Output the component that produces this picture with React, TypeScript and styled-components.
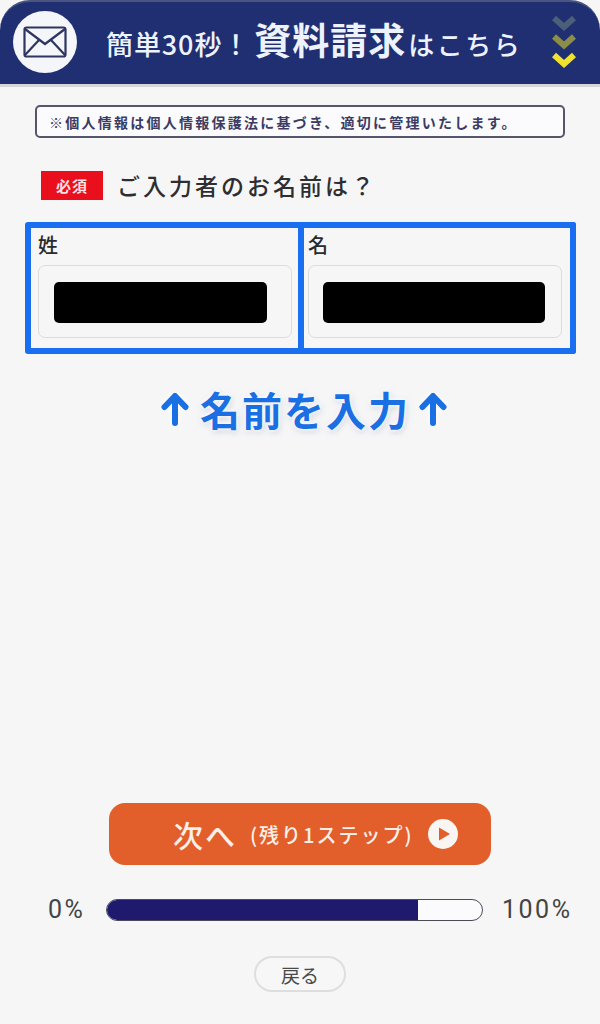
import React from "react";
import styled, { createGlobalStyle } from "styled-components";

const GlobalStyle = createGlobalStyle`
  html, body {
    margin: 0;
    padding: 0;
    background: #f6f6f7;
  }
  * {
    box-sizing: border-box;
  }
`;

const Page = styled.div`
  width: 600px;
  height: 1024px;
  display: flex;
  flex-direction: column;
  overflow: hidden;
  background: #f6f6f7;
  font-family: "Noto Sans CJK JP", "Noto Sans", sans-serif;
  color: #2e2e30;
`;

const Header = styled.header`
  height: 87px;
  flex: none;
  display: flex;
  align-items: center;
  padding: 0 24px 3px 13px;
  background: #1f2f72;
  border-top: 2px solid #4a5480;
  border-bottom: 3px solid #d4d6da;
  border-radius: 30px 30px 0 0;
`;

const MailBadge = styled.div`
  width: 64px;
  height: 62px;
  flex: none;
  display: flex;
  align-items: center;
  justify-content: center;
  border-radius: 50%;
  background: #f5f6fa;
`;

const HeaderTitle = styled.div`
  flex: 1;
  display: flex;
  align-items: baseline;
  margin: 0 0 5px 29px;
  color: #edf2fb;
  font-weight: 500;
  white-space: nowrap;
`;

const TitleLead = styled.span`
  font-size: 27px;
  letter-spacing: 0.9px;
`;

const TitleMain = styled.span`
  font-size: 37px;
  font-weight: 700;
  letter-spacing: 1px;
  margin-left: 4px;
  margin-right: 2px;
  line-height: 46px;
`;

const TitleTail = styled.span`
  font-size: 26px;
  letter-spacing: 2.5px;
`;

const Notice = styled.div`
  height: 33px;
  margin: 18px 35px 0;
  padding-left: 12px;
  display: flex;
  align-items: center;
  border: 2px solid #55566a;
  border-radius: 5px;
  background: #fbfbfd;
  color: #3c3c62;
  font-size: 14px;
  font-weight: 700;
  letter-spacing: 2.25px;
  white-space: nowrap;
`;

const Question = styled.div`
  display: flex;
  align-items: center;
  margin: 33px 0 0 41px;
`;

const Required = styled.span`
  width: 62px;
  height: 29px;
  display: flex;
  align-items: center;
  justify-content: center;
  background: #ea0f1c;
  color: #fbe3e3;
  font-size: 15px;
  font-weight: 700;
  letter-spacing: 1px;
`;

const QuestionText = styled.span`
  margin-left: 14px;
  font-size: 23px;
  font-weight: 500;
  letter-spacing: 3px;
  line-height: 29px;
`;

const NameGrid = styled.div`
  display: grid;
  grid-template-columns: 279px 272px;
  height: 132px;
  margin: 22px 0 0 25px;
`;

const NameBox = styled.div<{ $last?: boolean }>`
  padding: ${(p) => (p.$last ? "4px 8px 10px 4px" : "4px 6px 10px 7px")};
  border: 6px solid #1a6ef0;
  border-left-width: ${(p) => (p.$last ? 0 : 6)}px;
  border-radius: ${(p) => (p.$last ? "0 3px 3px 0" : "3px 0 0 3px")};
`;

const NameLabel = styled.div`
  height: 29px;
  font-size: 20px;
  font-weight: 500;
  line-height: 26px;
  color: #2a2a2a;
`;

const NameField = styled.div<{ $last?: boolean }>`
  height: 73px;
  margin-top: 4px;
  padding: ${(p) => (p.$last ? "16px 16px 14px 14px" : "16px 24px 14px 15px")};
  border: 1px solid #dcdcdc;
  border-radius: 7px;
  background: #f6f6f6;
`;

const Masked = styled.div`
  height: 41px;
  border-radius: 5px;
  background: #000;
`;

const Hint = styled.div`
  display: flex;
  align-items: center;
  justify-content: center;
  gap: 11px;
  height: 50px;
  margin: 30px 0 0 8px;
  color: #1a6fe3;
  font-size: 40px;
  font-weight: 700;
  line-height: 50px;
  text-shadow: 0 0 4px #fff, 0 0 4px #fff, 1px 2px 6px rgba(90, 110, 150, 0.35);
  letter-spacing: 2px;
`;

const HintText = styled.span`
  margin-right: -2px;
`;

const Footer = styled.div`
  margin-top: auto;
  padding-bottom: 32px;
  display: flex;
  flex-direction: column;
  align-items: center;
`;

const NextButton = styled.button`
  width: 382px;
  height: 62px;
  display: flex;
  align-items: center;
  padding: 0 33px 0 64px;
  border: 0;
  border-radius: 16px;
  background: #e25e2a;
  color: #f8efe8;
  font-family: inherit;
`;

const NextLabel = styled.span`
  font-size: 30px;
  font-weight: 500;
  letter-spacing: 2px;
  white-space: nowrap;
`;

const NextNote = styled.span`
  margin-left: 13px;
  font-size: 20px;
  font-weight: 500;
  letter-spacing: 2px;
  white-space: nowrap;
`;

const PlayIcon = styled.svg`
  margin-left: auto;
  flex: none;
`;

const ProgressRow = styled.div`
  width: 100%;
  display: flex;
  align-items: center;
  margin-top: 32px;
  padding: 0 28px 0 48px;
`;

const Percent = styled.span`
  min-width: 39px;
  font-family: Roboto, "Noto Sans", sans-serif;
  font-size: 25px;
  line-height: 26px;
  letter-spacing: 2.5px;
  color: #444;
`;

const Track = styled.div`
  flex: none;
  width: 377px;
  height: 22px;
  margin: 0 19px;
  border: 1.5px solid #4a4a58;
  border-radius: 11px;
  background: #fbfbfd;
  overflow: hidden;
`;

const Fill = styled.div`
  height: 100%;
  background: #1f1a6e;
`;

const BackButton = styled.button`
  width: 92px;
  height: 36px;
  margin-top: 33px;
  border: 2px solid #dedede;
  border-radius: 18px;
  background: #f7f7f8;
  color: #4a4a4a;
  font-family: inherit;
  font-size: 19px;
  line-height: 1;
  padding: 0;
`;

const ArrowIcon = styled.svg`
  flex: none;
  filter: drop-shadow(0 0 3px #fff);
`;

const UpArrow = () => (
  <ArrowIcon width="28" height="34" viewBox="0 0 28 34" fill="none">
    <path d="M14 31V5M3.5 15L14 4l10.5 11" stroke="#1a6fe3" strokeWidth="6" strokeLinecap="round" strokeLinejoin="round" />
  </ArrowIcon>
);

const Chevrons = () => (
  <svg width="24" height="56" viewBox="0 0 24 56" fill="none" strokeWidth="6">
    <path d="M2 4l10 9 10-9" stroke="#4b5f78" />
    <path d="M2 22.5l10 9 10-9" stroke="#8b8d48" />
    <path d="M2 41l10 9 10-9" stroke="#f1e22f" />
  </svg>
);

export default function App() {
  const progress = 83;
  return (
    <Page>
      <GlobalStyle />
      <Header>
        <MailBadge>
          <svg width="44" height="32" viewBox="0 0 44 32" fill="none" stroke="#2d3560" strokeWidth="2.2">
            <rect x="1.5" y="1.5" width="41" height="29" rx="2" />
            <path d="M2 3l20 15L42 3M2 29l14-15M42 29L28 14" />
          </svg>
        </MailBadge>
        <HeaderTitle>
          <TitleLead>簡単30秒！</TitleLead>
          <TitleMain>資料請求</TitleMain>
          <TitleTail>はこちら</TitleTail>
        </HeaderTitle>
        <Chevrons />
      </Header>
      <Notice>※個人情報は個人情報保護法に基づき、適切に管理いたします。</Notice>
      <Question>
        <Required>必須</Required>
        <QuestionText>ご入力者のお名前は？</QuestionText>
      </Question>
      <NameGrid>
        <NameBox>
          <NameLabel>姓</NameLabel>
          <NameField>
            <Masked />
          </NameField>
        </NameBox>
        <NameBox $last>
          <NameLabel>名</NameLabel>
          <NameField $last>
            <Masked />
          </NameField>
        </NameBox>
      </NameGrid>
      <Hint>
        <UpArrow />
        <HintText>名前を入力</HintText>
        <UpArrow />
      </Hint>
      <Footer>
        <NextButton>
          <NextLabel>次へ</NextLabel>
          <NextNote>(残り1ステップ)</NextNote>
          <PlayIcon width="30" height="30" viewBox="0 0 30 30">
            <circle cx="15" cy="15" r="15" fill="#f9f5f2" />
            <path d="M11 8.5L22 15l-11 6.5z" fill="#e25e2a" />
          </PlayIcon>
        </NextButton>
        <ProgressRow>
          <Percent>0%</Percent>
          <Track>
            <Fill style={{ width: `${progress}%` }} />
          </Track>
          <Percent>100%</Percent>
        </ProgressRow>
        <BackButton>戻る</BackButton>
      </Footer>
    </Page>
  );
}
